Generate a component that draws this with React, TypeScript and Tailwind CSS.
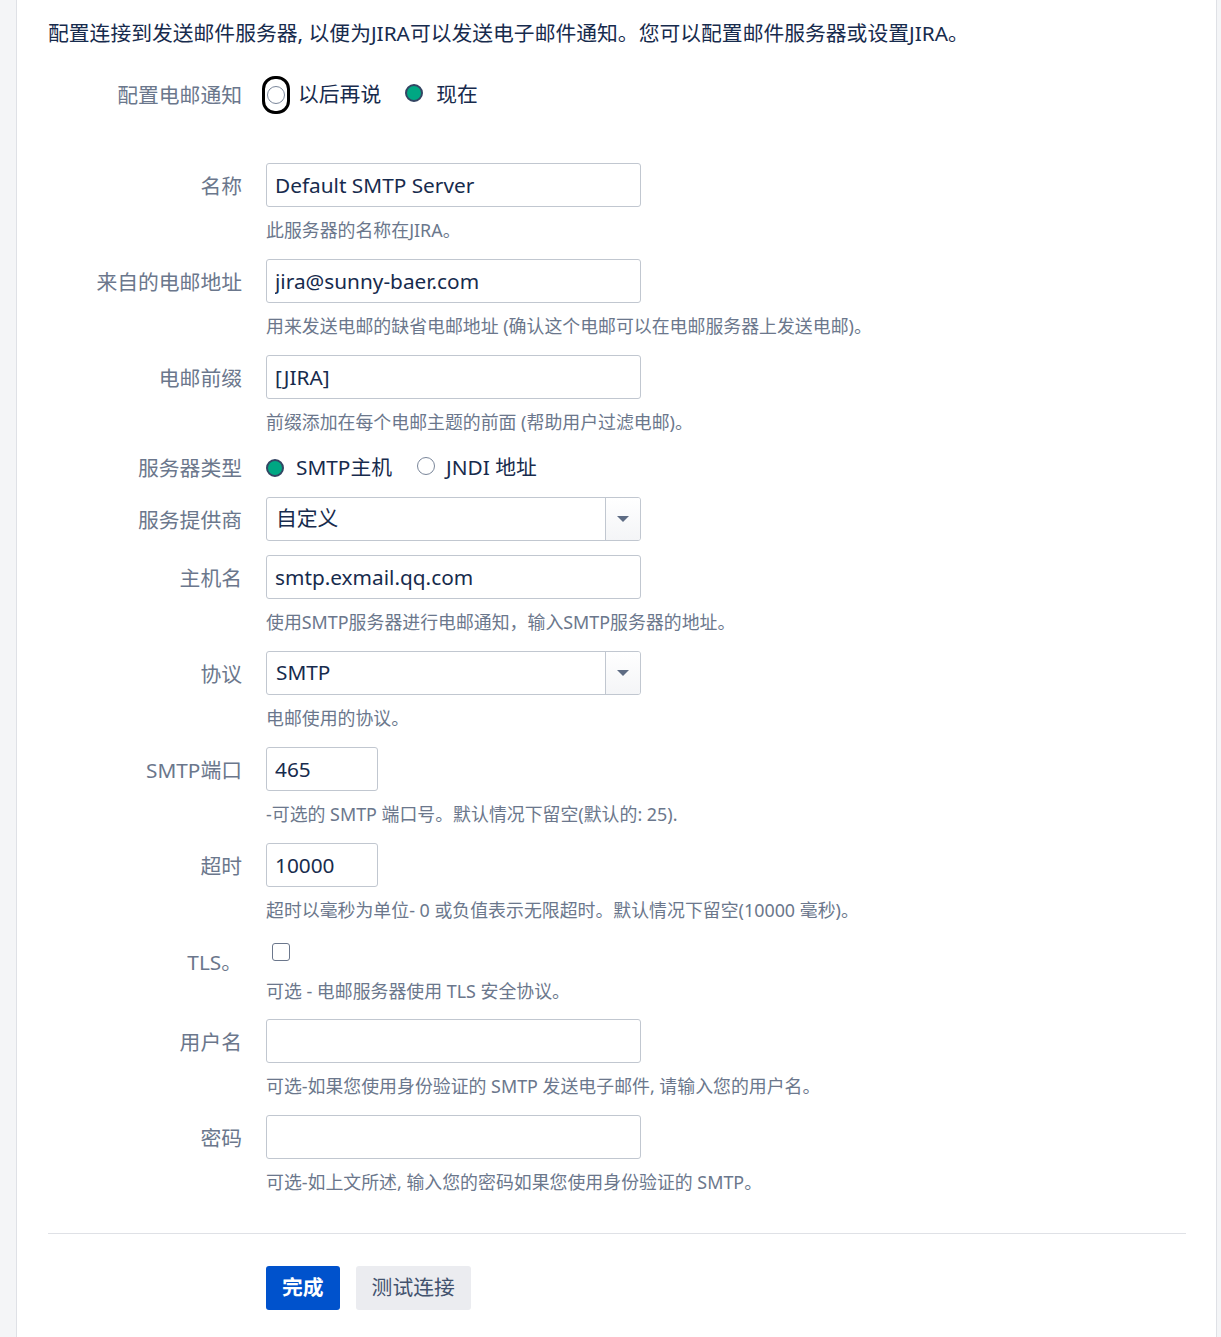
import React from 'react';

const labelCls =
  'w-[218px] shrink-0 pr-[24px] pt-[10px] text-right text-[20.8px] leading-[26px] text-[#6b778c]';
const descCls = 'mt-[10px] text-[17.9px] leading-[26px] text-[#6b778c]';
const inputCls =
  'h-[44px] rounded-[3px] border border-[#c1c7d0] bg-white px-[8px] text-[20.8px] text-[#172b4d] outline-none';

const Radio = ({ checked }: { checked?: boolean }) =>
  checked ? (
    <span className="inline-block h-[18px] w-[18px] shrink-0 rounded-full border-[2px] border-[#344563] bg-[#00a783]" />
  ) : (
    <span className="inline-block h-[18px] w-[18px] shrink-0 rounded-full border-[1.5px] border-[#7a869a] bg-white" />
  );

type FieldProps = {
  label: string;
  desc?: string;
  className?: string;
  children: React.ReactNode;
};

const Field: React.FC<FieldProps> = ({ label, desc, className, children }) => (
  <div className={'flex ' + (className ?? '')}>
    <div className={labelCls}>{label}</div>
    <div className="flex-1">
      {children}
      {desc && <div className={descCls}>{desc}</div>}
    </div>
  </div>
);

const TextInput = ({ value, small }: { value: string; small?: boolean }) => (
  <input
    readOnly
    value={value}
    className={inputCls + (small ? ' w-[112px]' : ' w-[375px]')}
  />
);

const Select = ({ value }: { value: string }) => (
  <div className="flex h-[44px] w-[375px] overflow-hidden rounded-[3px] border border-[#c1c7d0] bg-white">
    <div className="flex flex-1 items-center pl-[9px] text-[20.8px] text-[#172b4d]">{value}</div>
    <div className="flex w-[35px] items-center justify-center border-l border-[#c1c7d0] bg-gradient-to-b from-white to-[#f4f5f7]">
      <svg width="12" height="6" viewBox="0 0 12 6" aria-hidden="true">
        <path d="M0 0h12L6 6z" fill="#5e6c84" />
      </svg>
    </div>
  </div>
);

export default function App() {
  return (
    <div className="flex min-h-[1337px] bg-[#f4f5f7] font-['Noto_Sans','Noto_Sans_CJK_SC',sans-serif]">
      <div className="ml-[16px] mr-[4px] flex-1 border-x border-[#dfe1e6] bg-white pl-[31px] pr-[30px] pt-[19px]">
        <p className="text-[20.8px] leading-[28px] text-[#172b4d]">
          配置连接到发送邮件服务器, 以便为JIRA可以发送电子邮件通知。您可以配置邮件服务器或设置JIRA。
        </p>

        <Field label="配置电邮通知" className="mt-[25px]">
          <div className="flex h-[46px] items-center text-[20.8px] text-[#172b4d]">
            <span className="ml-[-4px] flex h-[38px] w-[28px] items-center justify-center rounded-[13px] border-[3px] border-black">
              <Radio />
            </span>
            <span className="ml-[8px]">以后再说</span>
            <span className="ml-[24px]">
              <Radio checked />
            </span>
            <span className="ml-[13px]">现在</span>
          </div>
        </Field>

        <Field label="名称" desc="此服务器的名称在JIRA。" className="mt-[45px]">
          <TextInput value="Default SMTP Server" />
        </Field>

        <Field
          label="来自的电邮地址"
          desc="用来发送电邮的缺省电邮地址 (确认这个电邮可以在电邮服务器上发送电邮)。"
          className="mt-[16px]"
        >
          <TextInput value="jira@sunny-baer.com" />
        </Field>

        <Field label="电邮前缀" desc="前缀添加在每个电邮主题的前面 (帮助用户过滤电邮)。" className="mt-[16px]">
          <TextInput value="[JIRA]" />
        </Field>

        <Field label="服务器类型" className="mt-[10px]">
          <div className="flex h-[46px] items-center text-[20.8px] text-[#172b4d]">
            <Radio checked />
            <span className="ml-[12px]">SMTP主机</span>
            <span className="ml-[25px]">
              <Radio />
            </span>
            <span className="ml-[11px]">JNDI 地址</span>
          </div>
        </Field>

        <Field label="服务提供商" className="mt-[6px]">
          <Select value="自定义" />
        </Field>

        <Field
          label="主机名"
          desc="使用SMTP服务器进行电邮通知，输入SMTP服务器的地址。"
          className="mt-[14px]"
        >
          <TextInput value="smtp.exmail.qq.com" />
        </Field>

        <Field label="协议" desc="电邮使用的协议。" className="mt-[16px]">
          <Select value="SMTP" />
        </Field>

        <Field
          label="SMTP端口"
          desc="-可选的 SMTP 端口号。默认情况下留空(默认的: 25)."
          className="mt-[16px]"
        >
          <TextInput value="465" small />
        </Field>

        <Field
          label="超时"
          desc="超时以毫秒为单位- 0 或负值表示无限超时。默认情况下留空(10000 毫秒)。"
          className="mt-[16px]"
        >
          <TextInput value="10000" small />
        </Field>

        <Field label="TLS。" desc="可选 - 电邮服务器使用 TLS 安全协议。" className="mt-[16px]">
          <div className="h-[29px] pt-[4px] pl-[6px]">
            <span className="block h-[18px] w-[18px] rounded-[3px] border-[1.5px] border-[#6b778c] bg-white" />
          </div>
        </Field>

        <Field
          label="用户名"
          desc="可选-如果您使用身份验证的 SMTP 发送电子邮件, 请输入您的用户名。"
          className="mt-[15px]"
        >
          <TextInput value="" />
        </Field>

        <Field
          label="密码"
          desc="可选-如上文所述, 输入您的密码如果您使用身份验证的 SMTP。"
          className="mt-[16px]"
        >
          <TextInput value="" />
        </Field>

        <div className="mt-[38px] border-t border-[#dfe1e6]" />

        <div className="mt-[32px] flex gap-[16px] pl-[218px]">
          <button className="h-[44px] rounded-[3px] bg-[#0052cc] px-[16px] text-[20.8px] font-bold text-white">
            完成
          </button>
          <button className="h-[44px] rounded-[3px] bg-[#ebecf0] px-[16px] text-[20.8px] text-[#42526e]">
            测试连接
          </button>
        </div>
      </div>
    </div>
  );
}
